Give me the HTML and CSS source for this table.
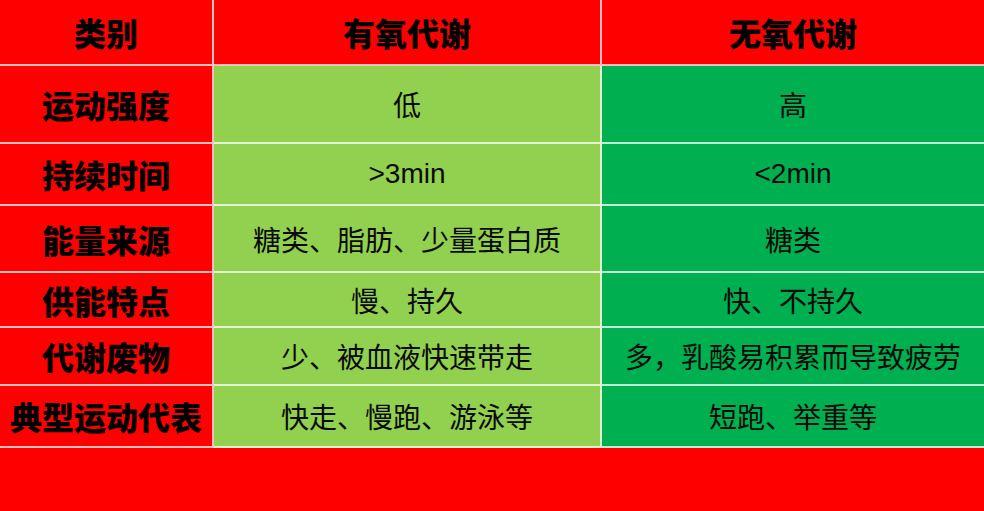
FILE: index.html
```html
<!DOCTYPE html>
<html lang="zh-CN">
<head>
<meta charset="utf-8">
<title>有氧代谢与无氧代谢</title>
<link rel="stylesheet" href="styles.css">
</head>
<body>
<div class="table">
  <div class="cell head r0">类别</div>
  <div class="cell head r0">有氧代谢</div>
  <div class="cell head r0 last">无氧代谢</div>

  <div class="cell head r1">运动强度</div>
  <div class="cell aer r1">低</div>
  <div class="cell ana r1 last">高</div>

  <div class="cell head r2">持续时间</div>
  <div class="cell aer r2">&gt;3min</div>
  <div class="cell ana r2 last">&lt;2min</div>

  <div class="cell head r3">能量来源</div>
  <div class="cell aer r3">糖类、脂肪、少量蛋白质</div>
  <div class="cell ana r3 last">糖类</div>

  <div class="cell head r4">供能特点</div>
  <div class="cell aer r4">慢、持久</div>
  <div class="cell ana r4 last">快、不持久</div>

  <div class="cell head r5">代谢废物</div>
  <div class="cell aer r5">少、被血液快速带走</div>
  <div class="cell ana r5 last">多，乳酸易积累而导致疲劳</div>

  <div class="cell head r6">典型运动代表</div>
  <div class="cell aer r6">快走、慢跑、游泳等</div>
  <div class="cell ana r6 last">短跑、举重等</div>
</div>
</body>
</html>
```

FILE: styles.css
```css
html, body {
  margin: 0;
  padding: 0;
  background: #ff0000;
  width: 984px;
  height: 511px;
  overflow: hidden;
}

.table {
  display: grid;
  grid-template-columns: 214px 388px 382px;
  grid-template-rows: 66px 78px 62px 67px 55px 58px 62px;
}

.cell {
  display: flex;
  align-items: center;
  justify-content: center;
  box-sizing: border-box;
  border-right: 2px solid rgba(255, 255, 255, 0.75);
  border-bottom: 2px solid rgba(255, 255, 255, 0.75);
  font-family: "Liberation Sans", "Noto Sans CJK SC", sans-serif;
  font-size: 28px;
  color: #0a0a0a;
  white-space: nowrap;
  overflow: hidden;
}

.cell.last {
  border-right: none;
}

.head {
  background: #ff0000;
  font-family: "Noto Sans CJK SC", sans-serif;
  font-weight: 900;
  font-size: 32px;
  color: #000;
}

.aer {
  background: #92d050;
}

.ana {
  background: #00b050;
}
```
